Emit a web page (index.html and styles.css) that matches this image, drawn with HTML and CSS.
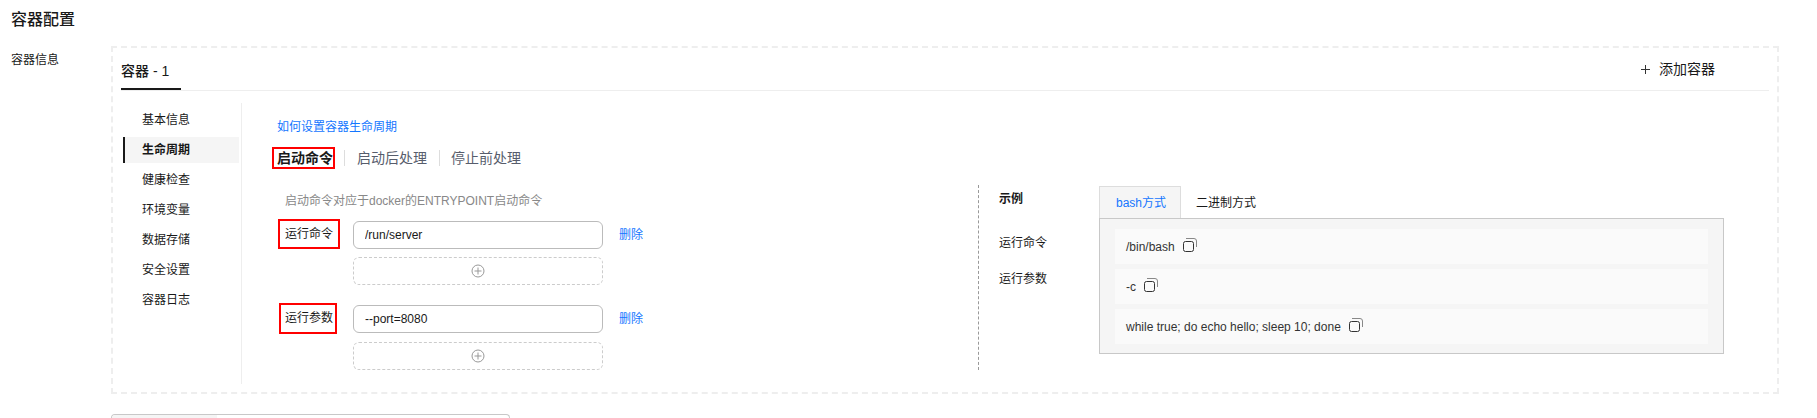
FILE: index.html
```html
<!DOCTYPE html>
<html lang="zh-CN">
<head>
    <meta charset="UTF-8">
    <title>容器配置</title>
    <link rel="stylesheet" href="styles.css">
</head>
<body>
    <h1 class="page-title">容器配置</h1>
    <div class="form-row">
        <div class="field-label">容器信息</div>
        <div class="container-box">
            <div class="tabs-bar">
                <div class="container-tab">容器 - 1</div>
                <div class="add-container">
                    <svg class="add-plus" width="9" height="9" viewBox="0 0 9 9" fill="none" stroke="#333"><path d="M4.5 0v9M0 4.5h9"/></svg>
                    添加容器
                </div>
            </div>
            <div class="box-body">
                <ul class="side-nav">
                    <li>基本信息</li>
                    <li class="active">生命周期</li>
                    <li>健康检查</li>
                    <li>环境变量</li>
                    <li>数据存储</li>
                    <li>安全设置</li>
                    <li>容器日志</li>
                </ul>
                <div class="main">
                    <a class="link help-link">如何设置容器生命周期</a>
                    <div class="sub-tabs">
                        <div class="sub-tab current">启动命令</div>
                        <div class="sub-tab">启动后处理</div>
                        <div class="sub-tab">停止前处理</div>
                    </div>
                    <div class="columns">
                        <div class="left-col">
                            <div class="hint">启动命令对应于docker的ENTRYPOINT启动命令</div>
                            <div class="cmd-group">
                                <div class="cmd-row">
                                    <div class="cmd-cell"><span class="cmd-label first">运行命令</span></div>
                                    <input class="cmd-input" value="/run/server">
                                    <a class="link del-link">删除</a>
                                </div>
                                <div class="add-line">
                                    <svg width="14" height="14" viewBox="0 0 14 14" fill="none" stroke="#999"><circle cx="7" cy="7" r="6"/><path d="M7 3.5v7M3.5 7h7"/></svg>
                                </div>
                            </div>
                            <div class="cmd-group">
                                <div class="cmd-row">
                                    <div class="cmd-cell"><span class="cmd-label second">运行参数</span></div>
                                    <input class="cmd-input" value="--port=8080">
                                    <a class="link del-link">删除</a>
                                </div>
                                <div class="add-line">
                                    <svg width="14" height="14" viewBox="0 0 14 14" fill="none" stroke="#999"><circle cx="7" cy="7" r="6"/><path d="M7 3.5v7M3.5 7h7"/></svg>
                                </div>
                            </div>
                        </div>
                        <div class="right-col">
                            <div class="example-labels">
                                <div class="example-title">示例</div>
                                <div class="example-cmd">运行命令</div>
                                <div class="example-arg">运行参数</div>
                            </div>
                            <div class="example">
                                <div class="example-tabs">
                                    <div class="example-tab on">bash方式</div>
                                    <div class="example-tab">二进制方式</div>
                                </div>
                                <div class="example-panel">
                                    <div class="code-row">/bin/bash
                                        <svg class="copy" width="14" height="14" viewBox="0 0 14 14" fill="none"><rect x="0.5" y="3.5" width="10" height="10" rx="2" stroke="#333"/><path d="M3 0.5h8a2.5 2.5 0 0 1 2.5 2.5v6" stroke="#888"/></svg>
                                    </div>
                                    <div class="code-row">-c
                                        <svg class="copy" width="14" height="14" viewBox="0 0 14 14" fill="none"><rect x="0.5" y="3.5" width="10" height="10" rx="2" stroke="#333"/><path d="M3 0.5h8a2.5 2.5 0 0 1 2.5 2.5v6" stroke="#888"/></svg>
                                    </div>
                                    <div class="code-row">while true; do echo hello; sleep 10; done
                                        <svg class="copy" width="14" height="14" viewBox="0 0 14 14" fill="none"><rect x="0.5" y="3.5" width="10" height="10" rx="2" stroke="#333"/><path d="M3 0.5h8a2.5 2.5 0 0 1 2.5 2.5v6" stroke="#888"/></svg>
                                    </div>
                                </div>
                            </div>
                        </div>
                    </div>
                </div>
            </div>
        </div>
    </div>
    <div class="next-select"><div class="next-select-part"></div></div>
</body>
</html>
```

FILE: styles.css
```css
* {
    box-sizing: border-box;
}
body {
    margin: 0;
    height: 418px;
    overflow: hidden;
    background: #fff;
    color: #191919;
    font-family: "Liberation Sans", "Noto Sans CJK SC", sans-serif;
    font-size: 12px;
}
.page-title {
    margin: 0;
    padding: 8px 11px;
    font-size: 16px;
    line-height: 24px;
    font-weight: 500;
}
.form-row {
    display: flex;
    margin-top: 6px;
    padding-left: 11px;
}
.field-label {
    width: 100px;
    padding-top: 6px;
    line-height: 16px;
}
.container-box {
    width: 1668px;
    height: 348px;
    padding: 0 8px;
    border: 2px dashed #eee;
}
.tabs-bar {
    display: flex;
    justify-content: space-between;
    height: 43px;
    border-bottom: 1px solid #eee;
}
.container-tab {
    width: 60px;
    height: 42px;
    border-bottom: 2px solid #191919;
    font-size: 14px;
    font-weight: 500;
    line-height: 47px;
}
.add-container {
    display: flex;
    align-items: center;
    margin-right: 54px;
    font-size: 14px;
    line-height: 43px;
}
.add-plus {
    margin-right: 9px;
}
.box-body {
    display: flex;
    margin-top: 12px;
    height: 281px;
}
.side-nav {
    width: 121px;
    margin: 0;
    padding: 4px 0 0 2px;
    border-right: 1px solid #eee;
    list-style: none;
}
.side-nav li {
    width: 116px;
    height: 26px;
    margin-bottom: 4px;
    padding-left: 19px;
    line-height: 26px;
}
.side-nav li.active {
    padding-left: 17px;
    border-left: 2px solid #191919;
    background: #f5f5f5;
    font-weight: 700;
}
.main {
    flex: 1;
    padding-top: 16px;
}
.link {
    color: #1476ff;
}
.help-link {
    display: block;
    margin-left: 35px;
    line-height: 16px;
}
.sub-tabs {
    display: flex;
    height: 22px;
    margin: 12px 0 0 30px;
    font-size: 14px;
    line-height: 18px;
}
.sub-tab {
    color: #575d6c;
    padding: 0 12px;
    margin-top: 3px;
    height: 16px;
    line-height: 16px;
    border-left: 1px solid #ddd;
}
.sub-tab:last-child {
    padding-left: 11px;
}
.sub-tab.current {
    width: 63px;
    height: 22px;
    margin: 0 9px 0 0;
    padding: 0 0 0 3px;
    border: 2px solid #f00;
    color: #191919;
    font-weight: 700;
    line-height: 18px;
}
.columns {
    display: flex;
    margin-top: 16px;
}
.left-col {
    width: 736px;
    padding-left: 35px;
}
.hint {
    margin: 8px 0 10px 8px;
    color: #888;
    line-height: 16px;
}
.cmd-group {
    margin-bottom: 18px;
}
.cmd-group:last-child {
    margin-bottom: 0;
}
.cmd-row {
    display: flex;
}
.cmd-cell {
    width: 76px;
}
.cmd-label {
    display: block;
    border: 2px solid #f00;
}
.cmd-label.first {
    width: 62px;
    height: 30px;
    margin-left: 1px;
    padding-left: 5px;
    line-height: 26px;
}
.cmd-label.second {
    width: 58px;
    height: 31px;
    margin-left: 2px;
    padding-left: 4px;
    line-height: 27px;
}
.cmd-input {
    width: 250px;
    height: 28px;
    margin: 2px 0 0;
    padding: 0 11px;
    border: 1px solid #bbb;
    border-radius: 6px;
    outline: none;
    color: #191919;
    font-family: inherit;
    font-size: 12px;
}
.del-link {
    margin: 2px 0 0 16px;
    line-height: 28px;
}
.add-line {
    display: flex;
    align-items: center;
    justify-content: center;
    width: 250px;
    height: 28px;
    margin: 8px 0 0 76px;
    border: 1px dashed #ccc;
    border-radius: 6px;
}
.right-col {
    display: flex;
    flex: 1;
    padding: 1px 0 0 20px;
    border-left: 1px dashed #999;
}
.example-labels {
    width: 100px;
    line-height: 16px;
}
.example-title {
    margin-top: 5px;
    font-weight: 700;
}
.example-cmd {
    margin-top: 28px;
}
.example-arg {
    margin-top: 20px;
}
.example {
    width: 625px;
}
.example-tabs {
    display: flex;
    height: 32px;
}
.example-tab {
    padding: 0 15px;
    line-height: 34px;
    white-space: nowrap;
}
.example-tab.on {
    width: 82px;
    padding: 0 0 0 16px;
    border: 1px solid #ddd;
    border-bottom: none;
    background: #f5f5f5;
    color: #1476ff;
    line-height: 33px;
}
.example-panel {
    height: 136px;
    padding: 10px 15px 9px;
    border: 1px solid #c8c8c8;
    background: #f5f5f5;
}
.code-row {
    display: flex;
    align-items: center;
    height: 35px;
    margin-bottom: 5px;
    padding-left: 11px;
    background: #fafafa;
    color: #333;
}
.code-row:last-child {
    margin-bottom: 0;
}
.copy {
    margin: -3px 0 0 8px;
}
.next-select {
    width: 399px;
    height: 4px;
    margin: 20px 0 0 111px;
    border: 1px solid #c8c8c8;
    border-bottom: none;
    border-radius: 6px 6px 0 0;
    overflow: hidden;
}
.next-select-part {
    width: 105px;
    height: 100%;
    background: #f5f5f5;
}
```
